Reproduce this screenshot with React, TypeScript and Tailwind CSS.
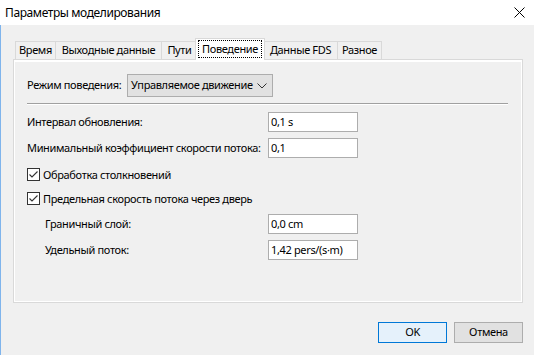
import React from "react";

const font = { fontFamily: '"Noto Sans", "Liberation Sans", sans-serif' };

function Checkbox({ label }: { label: string }) {
  return (
    <div className="flex items-center h-[13px]">
      <div className="w-[13px] h-[13px] border border-[#333333] bg-white flex items-center justify-center shrink-0">
        <svg width="11" height="11" viewBox="0 0 11 11">
          <path d="M1.5 5.5 L4 8 L9.5 2.5" fill="none" stroke="#333333" strokeWidth="1.1" />
        </svg>
      </div>
      <span className="ml-[3px] leading-none whitespace-nowrap">{label}</span>
    </div>
  );
}

function InputRow({ label, value, indent }: { label: string; value: string; indent?: boolean }) {
  return (
    <div className="grid grid-cols-[241px_90px] h-[20px] items-center">
      <span className={"whitespace-nowrap " + (indent ? "pl-[18px]" : "")}>{label}</span>
      <div className="h-[20px] border border-[#adadad] bg-white flex items-center pl-[2px] whitespace-nowrap">
        {value}
      </div>
    </div>
  );
}

export default function App() {
  const tabs = [
    { t: "Время", w: "w-[40px]" },
    { t: "Выходные данные", w: "w-[106px]" },
    { t: "Пути", w: "w-[36px]" },
  ];
  return (
    <div
      className="w-[534px] h-[355px] bg-white flex flex-col overflow-hidden text-[11px] tracking-[-0.35px] text-black"
      style={font}
    >
      {/* Title bar */}
      <div className="h-[25px] flex items-center justify-between pl-[5px] pr-[9px] shrink-0">
        <span className="text-[12px] tracking-[-0.4px]">Параметры моделирования</span>
        <svg width="11" height="11" viewBox="0 0 11 11">
          <path d="M0.5 0.5 L10.5 10.5 M10.5 0.5 L0.5 10.5" stroke="#000" strokeWidth="1" />
        </svg>
      </div>

      {/* Body */}
      <div className="flex-1 bg-[#f0f0f0] border-l border-[#7fb4ec] pl-[12px] pr-[11px] pt-[13px] flex flex-col">
        {/* Tabs */}
        <div className="flex items-end h-[21px] pl-[2px]">
          {tabs.map((x) => (
            <div
              key={x.t}
              className={`${x.w} h-[18px] border-t border-l border-[#d9d9d9] flex items-center justify-center whitespace-nowrap`}
            >
              {x.t}
            </div>
          ))}
          <div className="relative z-10 w-[70px] -mx-[2px] h-[22px] -mb-px bg-white border-t border-l border-r border-[#d9d9d9] flex items-start justify-center pt-[1px] whitespace-nowrap">
            <span className="border border-dotted border-black h-[18px] w-[64px] flex items-center justify-center">
              Поведение
            </span>
          </div>
          <div className="w-[74px] h-[18px] border-t border-l border-[#d9d9d9] flex items-center justify-center whitespace-nowrap">
            Данные FDS
          </div>
          <div className="w-[45px] h-[18px] border-t border-l border-r border-[#d9d9d9] flex items-center justify-center whitespace-nowrap">
            Разное
          </div>
        </div>

        {/* Panel */}
        <div className="h-[244px] border border-[#d9d9d9] shadow-[inset_1px_2px_0_#ffffff,inset_-1px_-1px_0_#ffffff] pl-[13px] pt-[14px] flex flex-col">
          <div className="flex items-center h-[23px]">
            <span className="w-[100px] whitespace-nowrap">Режим поведения:</span>
            <div className="w-[146px] h-[23px] bg-[#e1e1e1] border border-[#adadad] flex items-center justify-between pl-[3px] pr-[5px] whitespace-nowrap">
              <span>Управляемое движение</span>
              <svg width="10" height="6" viewBox="0 0 10 6">
                <path d="M0.5 0.5 L5 5 L9.5 0.5" fill="none" stroke="#333" strokeWidth="1" />
              </svg>
            </div>
          </div>

          <div className="mt-[6px] w-[481px] border-t border-[#a0a0a0] border-b border-b-white" />

          <div className="mt-[7px]">
            <InputRow label="Интервал обновления:" value="0,1 s" />
          </div>
          <div className="mt-[6px]">
            <InputRow label="Минимальный коэффициент скорости потока:" value="0,1" />
          </div>
          <div className="mt-[10px]">
            <Checkbox label="Обработка столкновений" />
          </div>
          <div className="mt-[11px]">
            <Checkbox label="Предельная скорость потока через дверь" />
          </div>
          <div className="mt-[9px]">
            <InputRow indent label="Граничный слой:" value="0,0 cm" />
          </div>
          <div className="mt-[6px]">
            <InputRow indent label="Удельный поток:" value="1,42 pers/(s·m)" />
          </div>
        </div>

        {/* Buttons */}
        <div className="flex justify-end gap-[7px] mt-[19px]">
          <div className="w-[69px] h-[21px] border border-[#0078d7] bg-[#e5f1fb] flex items-center justify-center">
            OK
          </div>
          <div className="w-[69px] h-[21px] border border-[#adadad] bg-[#e1e1e1] flex items-center justify-center">
            Отмена
          </div>
        </div>
      </div>
    </div>
  );
}
